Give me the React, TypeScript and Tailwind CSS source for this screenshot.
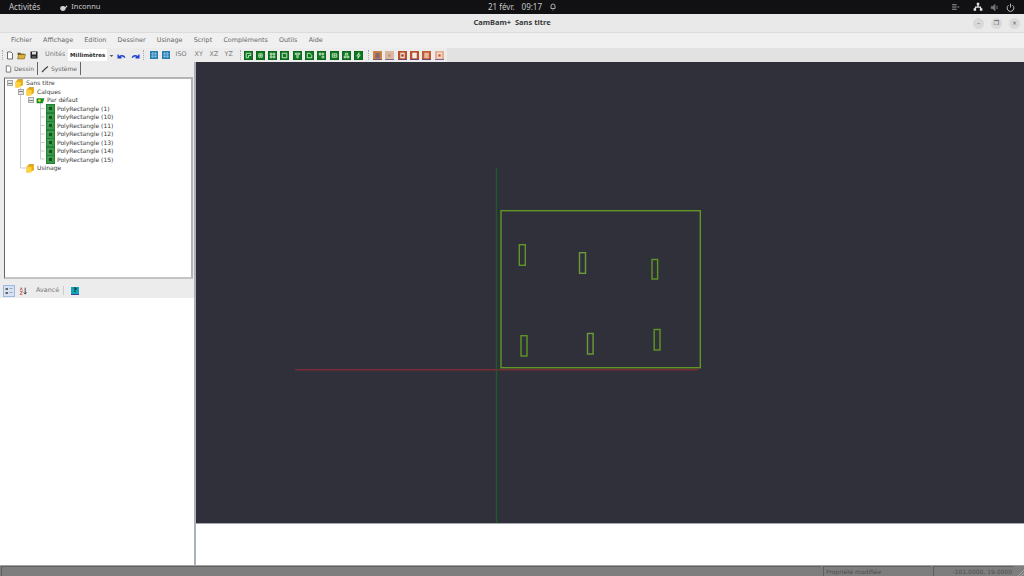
const menus = ["Fichier", "Affichage", "Edition", "Dessiner", "Usinage", "Script", "Compléments", "Outils", "Aide"];
const rects = ["(1)", "(10)", "(11)", "(12)", "(13)", "(14)", "(15)"];
const greenTools = [
  "M4 4h8v4H8v4H4z", "M5 5h6v6H5z M7 7h2v2H7z", "M4 4h3v3H4z M9 4h3v3H9z M4 9h3v3H4z M9 9h3v3H9z", "M4 4h8v8H4z",
  "M4 4h8v2H9v6H7V6H4z", "M4 4h5l3 4v4H4z", "M4 4h3v3H4z M9 9h3v3H9z M9 4h3v2H9z", "M4 5h8v6H4z M7 7h2v2H7z",
  "M4 9h3v3H4z M9 9h3v3H9z M6 4h4v3H6z", "M9 3L5 9h3l-1 4 4-6H8z",
];
const brownTools = [
  { bg: "#d0823a", inner: "#b45a1e", paper: "#7a6a9a" },
  { bg: "#d9b8a0", inner: "#c58f6c", paper: "#d9b8a0" },
  { bg: "#b8502c", inner: "#8a3a20", paper: "#f0dcd0" },
  { bg: "#b8502c", inner: "#f4ece4", paper: "#f4ece4" },
  { bg: "#c25a34", inner: "#e6b8a0", paper: "#e6b8a0" },
  { bg: "#e8b090", inner: "#c4502c", paper: "#f4e2d6" },
];

function GreenTool({ d }: { d: string }) {
  return (
    <svg viewBox="0 0 16 16" className="w-[9px] h-[9px]">
      <rect width="16" height="16" fill="#0b7a1c" />
      <rect x="0.5" y="0.5" width="15" height="15" fill="none" stroke="#145a22" />
      <path d={d} fill="none" stroke="#cfe6cf" strokeWidth="1.6" />
    </svg>
  );
}

function BrownTool({ bg, inner, paper }: { bg: string; inner: string; paper: string }) {
  return (
    <svg viewBox="0 0 16 16" className="w-[9px] h-[9px]">
      <rect width="16" height="16" fill={bg} />
      <rect x="4" y="3" width="8" height="10" fill={paper} />
      <rect x="6" y="6" width="4" height="4" fill={inner} />
      <path d="M0 15.5h16" stroke="#4a3f8f" strokeWidth="1.5" />
    </svg>
  );
}

function BlueTool() {
  return (
    <svg viewBox="0 0 16 16" className="w-[8px] h-[8px]">
      <rect width="16" height="16" fill="#2a7db0" />
      <path d="M2 5.5h12M2 10.5h12M5.5 2v12M10.5 2v12" stroke="#a9d6ee" strokeWidth="1.2" />
    </svg>
  );
}

function FolderIcon() {
  return (
    <svg viewBox="0 0 16 16" className="w-[9px] h-[9px] shrink-0">
      <path d="M1 5l4-4h9v10l-9 4H1z" fill="#e8a912" />
      <path d="M1 5h9v10H1z" fill="#ffd23e" />
      <path d="M5 1h9" fill="none" stroke="#a87c10" strokeWidth="1" />
    </svg>
  );
}

function RectIcon() {
  return (
    <svg viewBox="0 0 16 16" className="w-[9px] h-[9px] shrink-0">
      <rect width="16" height="16" fill="#3a9a4c" />
      <rect x="0.5" y="0.5" width="15" height="15" fill="none" stroke="#1c6a2c" />
      <rect x="4" y="4" width="8" height="8" fill="#0c5a14" stroke="#7fc088" strokeWidth="0.8" />
    </svg>
  );
}

function Toggle() {
  return (
    <span className="flex items-center justify-center w-[6px] h-[6px] shrink-0 border border-[#a8a8a8] bg-[#e6e6e6]">
      <span className="w-[4px] h-px bg-[#808080]" />
    </span>
  );
}

function TreeRow({ indent, children }: { indent: string; children: React.ReactNode }) {
  return <div className={`flex items-center h-[8.5px] gap-[2px] ${indent}`}>{children}</div>;
}

function Label({ children }: { children: React.ReactNode }) {
  return <span className="text-[6px] leading-none text-[#3a3a3a] whitespace-nowrap">{children}</span>;
}

function Sep() {
  return <span className="block w-px h-[10px] border-l border-dotted border-[#aaaaaa]" />;
}

export default function App() {
  return (
    <div className="w-[1024px] h-[576px] flex flex-col overflow-hidden bg-[#ececec] font-['DejaVu_Sans',sans-serif]">
      {/* gnome top bar */}
      <div className="h-[14px] shrink-0 bg-[#111113] text-[#c8c8c8] text-[8px] font-['Noto_Sans',sans-serif] flex items-center relative">
        <span className="ml-[9px]">Activités</span>
        <svg viewBox="0 0 16 16" className="w-[9px] h-[9px] ml-[19px]">
          <path d="M2 9a5 4 0 0 1 9-2l3-3 1 2-3 3a5 5 0 0 1-10 0z" fill="#d2d2d2" />
        </svg>
        <span className="ml-[3px] text-[7.5px]">Inconnu</span>
        <div className="absolute left-[488px] flex items-center gap-[7px]">
          <span>21 févr.</span>
          <span>09:17</span>
          <svg viewBox="0 0 16 16" className="w-[8px] h-[8px]" fill="none" stroke="#d2d2d2" strokeWidth="1.6">
            <path d="M8 2a4 4 0 0 1 4 4v5H4V6a4 4 0 0 1 4-4zM7 14h2" />
          </svg>
        </div>
        <div className="ml-auto mr-[9px] flex items-center gap-[7px]">
          <svg viewBox="0 0 16 16" className="w-[9px] h-[9px] mr-[6px]" fill="#9a9a9a">
            <path d="M2 2h8v2H2zM2 6h8v2H2zM2 10h8v2H2zM11 6h4l-2 3z" />
          </svg>
          <svg viewBox="0 0 16 16" className="w-[10px] h-[10px]" fill="#e6e6e6">
            <path d="M6 1h4v4H6zM1 10h4v4H1zM11 10h4v4h-4zM7 5h2v2h4v3h-2V9H5v1H3V7h4z" />
          </svg>
          <svg viewBox="0 0 16 16" className="w-[9px] h-[9px]" fill="#777777">
            <path d="M2 6h3l4-4v12l-4-4H2zM11 5l3 6M14 5l-3 6" stroke="#777777" />
          </svg>
          <svg viewBox="0 0 16 16" className="w-[9px] h-[9px]" fill="none" stroke="#cfcfcf" strokeWidth="1.6">
            <path d="M8 1v7M4.5 4a6 6 0 1 0 7 0" />
          </svg>
        </div>
      </div>

      {/* title bar */}
      <div className="h-[19px] shrink-0 bg-[#e9e9e9] border-b border-[#dcdcdc] flex items-center relative">
        <span className="w-full text-center text-[7.5px] font-bold text-[#3a3a3a] font-['Noto_Sans',sans-serif]">CamBam+&nbsp; Sans titre</span>
        <div className="absolute right-[4px] flex items-center gap-[7px]">
          {["–", "❐", "×"].map((c) => (
            <span key={c} className="w-[11px] h-[11px] rounded-full bg-[#d9d9d9] text-[#555555] text-[6px] leading-none flex items-center justify-center">
              {c}
            </span>
          ))}
        </div>
      </div>

      {/* menu bar */}
      <div className="h-[15px] shrink-0 bg-[#f0f0f0] flex items-center pl-[11px] gap-[11.2px] text-[6.4px] text-[#666666]">
        {menus.map((m) => (
          <span key={m}>{m}</span>
        ))}
      </div>

      {/* tool bar */}
      <div className="h-[14px] shrink-0 bg-[#e2e2e2] flex items-center">
        <div className="w-[447px] h-full bg-[#ececec] flex items-center pl-[2px] text-[6.4px] text-[#777777]">
          <Sep />
          <svg viewBox="0 0 16 16" className="w-[8px] h-[9px] ml-[3px]" fill="#fff" stroke="#333" strokeWidth="1.4">
            <path d="M3 1h7l3 3v11H3z" />
          </svg>
          <svg viewBox="0 0 16 16" className="w-[9px] h-[9px] ml-[3px]">
            <path d="M1 3h5l1 2h6v2H1z" fill="#6b5518" />
            <path d="M1 14l2-8h12l-2 8z" fill="#d8b23a" stroke="#6b5518" />
          </svg>
          <svg viewBox="0 0 16 16" className="w-[8px] h-[8px] ml-[4px]">
            <rect x="1" y="1" width="14" height="14" fill="#222" />
            <rect x="4" y="2" width="8" height="5" fill="#ddd" />
            <rect x="4" y="10" width="8" height="5" fill="#555" />
          </svg>
          <span className="ml-[7px] w-[23px]">Unités</span>
          <div className="w-[39px] h-[12px] bg-white flex items-center pl-[2px] text-[#333333] font-bold text-[5.6px]">Millimètres</div>
          <svg viewBox="0 0 8 8" className="w-[5px] h-[5px] ml-[1.5px]" fill="#555555">
            <path d="M1 3h6L4 6.5z" />
          </svg>
          <svg viewBox="0 0 16 16" className="w-[9px] h-[9px] ml-[3px]" fill="none" stroke="#1f3fd0" strokeWidth="2.4">
            <path d="M3 12a6 6 0 0 1 11 0M2 6v6h6" />
          </svg>
          <svg viewBox="0 0 16 16" className="w-[9px] h-[9px] ml-[5px]" fill="none" stroke="#1f3fd0" strokeWidth="2.4">
            <path d="M13 12a6 6 0 0 0-11 0M14 6v6H8" />
          </svg>
          <span className="ml-[3px]"><Sep /></span>
          <span className="ml-[6px]"><BlueTool /></span>
          <span className="ml-[4px]"><BlueTool /></span>
          <span className="ml-[6px] w-[19px]">ISO</span>
          <span className="w-[15px]">XY</span>
          <span className="w-[15px]">XZ</span>
          <span className="w-[15px]">YZ</span>
          <Sep />
          <div className="flex items-center gap-[3.3px] ml-[3px]">
            {greenTools.map((d, i) => (
              <GreenTool key={i} d={d} />
            ))}
          </div>
          <span className="ml-[5px]"><Sep /></span>
          <div className="flex items-center gap-[3.3px] ml-[4px]">
            {brownTools.map((c, i) => (
              <BrownTool key={i} {...c} />
            ))}
          </div>
        </div>
      </div>

      {/* main */}
      <div className="flex-1 min-h-0 flex flex-col">
        <div className="h-[462px] flex shrink-0">
          {/* left column */}
          <div className="w-[194px] shrink-0 bg-[#ececec] flex flex-col">
            <div className="h-[13px] shrink-0 flex items-end pl-[3px] text-[6px] text-[#666666]">
              <div className="h-[13px] w-[35px] flex items-center gap-[2px] pl-[2px] border-r border-[#666666]">
                <svg viewBox="0 0 16 16" className="w-[7px] h-[8px]" fill="#fff" stroke="#333" strokeWidth="1.4">
                  <path d="M3 1h7l3 3v11H3z" />
                </svg>
                Dessin
              </div>
              <div className="h-[13px] w-[43px] flex items-center gap-[2px] pl-[3px] border-r border-[#666666]">
                <svg viewBox="0 0 16 16" className="w-[8px] h-[8px]" fill="none" stroke="#444" strokeWidth="2.4">
                  <path d="M2 14l7-7M9 7l5-4" />
                </svg>
                Système
              </div>
            </div>
            <div className="h-[202px] shrink-0 ml-[4px] mt-[2px] mr-px border-t-2 border-l border-r-2 border-b-2 border-t-[#b4b4b4] border-l-[#666666] border-r-[#b4b4b4] border-b-[#c4c4c4] bg-white pl-[2px] relative">
              <svg className="absolute left-0 top-0 w-[60px] h-[100px]" fill="none" stroke="#cccccc">
                <path d="M15.5 9v80h6M25.5 19v3M35.5 22v58M35.5 29.5h4M35.5 38h4M35.5 46.5h4M35.5 55h4M35.5 63.5h4M35.5 72h4M35.5 80h4" />
              </svg>
              <div className="relative">
                <TreeRow indent="">
                  <Toggle />
                  <FolderIcon />
                  <Label>Sans titre</Label>
                </TreeRow>
                <TreeRow indent="pl-[11px]">
                  <Toggle />
                  <FolderIcon />
                  <Label>Calques</Label>
                </TreeRow>
                <TreeRow indent="pl-[21px]">
                  <Toggle />
                  <svg viewBox="0 0 16 16" className="w-[9px] h-[9px] shrink-0">
                    <path d="M1 4h14l-3 9H1z" fill="#1a8a2e" />
                    <circle cx="6" cy="8" r="2.4" fill="#e8e020" />
                  </svg>
                  <Label>Par défaut</Label>
                </TreeRow>
                {rects.map((r) => (
                  <TreeRow key={r} indent="pl-[39px]">
                    <RectIcon />
                    <Label>PolyRectangle {r}</Label>
                  </TreeRow>
                ))}
                <TreeRow indent="pl-[19px]">
                  <FolderIcon />
                  <Label>Usinage</Label>
                </TreeRow>
              </div>
            </div>
            {/* properties toolbar */}
            <div className="h-[15px] shrink-0 mt-[4px] bg-[#ececec] flex items-center pl-[3px] text-[6.4px] text-[#777777]">
              <span className="w-[12px] h-[12px] bg-[#d5e2f3] border border-[#9db9de] flex items-center justify-center">
                <svg viewBox="0 0 16 16" className="w-[8px] h-[8px]" fill="#666666">
                  <path d="M1 2h5v4H1zM9 3h6v1H9zM1 10h5v4H1zM9 11h6v1H9z" />
                </svg>
              </span>
              <svg viewBox="0 0 16 16" className="w-[9px] h-[10px] ml-[4px]" fill="none">
                <path d="M2 7l2-5 2 5M2 9h4L2 14h4" stroke="#b03030" strokeWidth="1.2" />
                <path d="M11 2v11M8.5 10.5l2.5 3 2.5-3" stroke="#222222" strokeWidth="1.4" />
              </svg>
              <span className="ml-[8px]">Avancé</span>
              <span className="ml-[4px] w-px h-[9px] bg-[#cccccc]" />
              <span className="ml-[7px] w-[8px] h-[8px] bg-[#12a5b8] border-b border-[#4040a0] text-[6px] leading-none font-bold text-[#111111] flex items-center justify-center">?</span>
            </div>
            <div className="flex-1 bg-white" />
          </div>
          {/* splitter + canvas */}
          <div className="w-[2px] shrink-0 bg-[#a9b2bb]" />
          <div className="flex-1 bg-[#30303a] border-b border-[#a0a8b0]">
            <svg viewBox="196 62 828 461" className="w-full h-full block" fill="none" strokeWidth="1.4">
              <path d="M295 369.7h403" stroke="#7a2a35" />
              <path d="M496.5 168v355" stroke="#1c5a2a" />
              <rect x="501" y="210.7" width="199.3" height="157" stroke="#5f9624" />
              <rect x="519.3" y="244.7" width="6" height="20.6" stroke="#5f9624" />
              <rect x="579.5" y="252.7" width="6" height="20.6" stroke="#6d9a3a" />
              <rect x="652" y="259.5" width="5.6" height="19.5" stroke="#5f9624" />
              <rect x="521" y="335.7" width="6" height="20.3" stroke="#5f9624" />
              <rect x="587.5" y="333.5" width="5.6" height="20.5" stroke="#6d9a3a" />
              <rect x="654.2" y="329.5" width="5.8" height="20.5" stroke="#5f9624" />
            </svg>
          </div>
        </div>
        {/* bottom */}
        <div className="flex-1 flex min-h-0">
          <div className="w-[194px] bg-white" />
          <div className="w-[2px] bg-[#a9b2bb]" />
          <div className="flex-1 bg-white" />
        </div>
        {/* status bar */}
        <div className="h-[11px] shrink-0 bg-[#7e7e7e] border-t border-[#a2a2a2] flex gap-[2px] pl-px text-[6px] leading-none text-[#4e4e4e]">
          <div className="flex-1 border-l border-t border-[#606060]" />
          <div className="w-[108px] border-l border-t border-[#606060] flex items-center pl-[2px]">Propriété modifiée</div>
          <div className="w-[81px] border-l border-t border-[#606060] flex items-center justify-end pr-[2px]">-101.0000, 19.0000</div>
          <div className="w-[8px] flex items-end justify-end">
            <svg viewBox="0 0 8 8" className="w-[8px] h-[8px]" fill="none" stroke="#a8a8a8">
              <path d="M8 2L2 8M8 5L5 8" />
            </svg>
          </div>
        </div>
      </div>
    </div>
  );
}
